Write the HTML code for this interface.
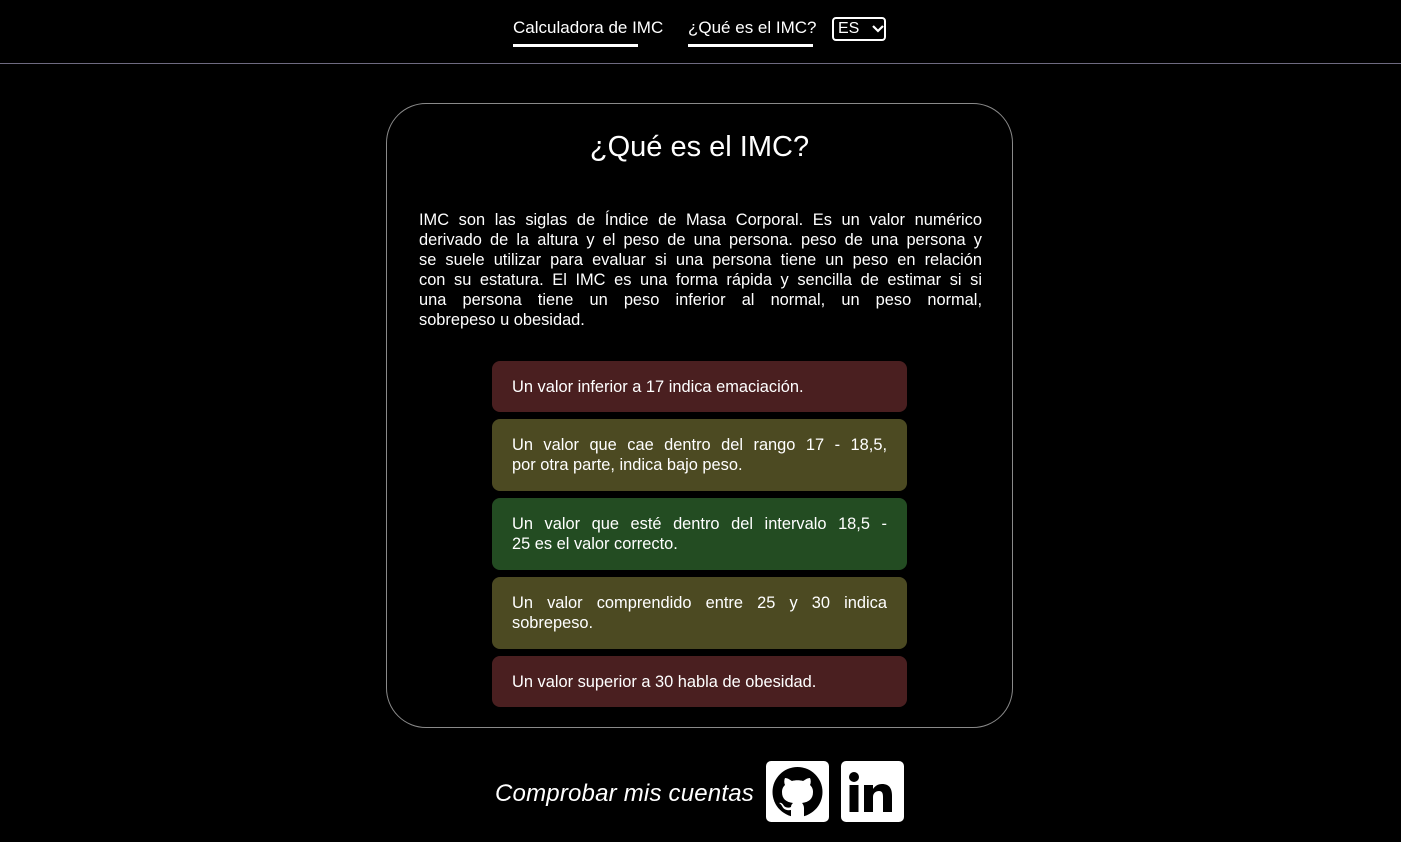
<!DOCTYPE html>
<html><head><meta charset="utf-8"><style>
body{margin:0;background:#000;color:#fff;font-family:"Liberation Sans",sans-serif;width:1401px;height:842px;overflow:hidden;position:relative}
.hdr{position:absolute;left:0;top:0;width:1401px;height:63px;border-bottom:1px solid #6e6a80}
.nav{position:absolute;top:18px;font-size:17px;white-space:nowrap}
.nav span{display:block;height:3px;background:#fff;margin-top:6px}
.sel{position:absolute;left:832px;top:17px;width:54px;height:24px;border:2px solid #fff;border-radius:4px;box-sizing:border-box;background:#000;font-size:16px;line-height:20px;padding-left:4px}
.card{position:absolute;left:386px;top:103px;width:625px;height:623px;border:1px solid #8a8a8a;border-radius:40px}
h1{position:absolute;left:0;width:100%;top:27px;margin:0;text-align:center;font-weight:normal;font-size:29px}
.p{position:absolute;left:32px;top:106px;width:563px;font-size:16.4px;line-height:20px}
.j{text-align:justify;text-align-last:justify;white-space:nowrap}
.b{position:absolute;left:105px;width:375px;padding:0 20px;border-radius:8px;font-size:16.4px;line-height:20px;display:flex;flex-direction:column;justify-content:center}
.r{background:#4a1f20}.y{background:#4c4a22}.g{background:#234c22}
.ft{position:absolute;top:780px;left:495px;font-style:italic;font-size:24px;letter-spacing:0.2px}
.ic{position:absolute;top:761px;width:63px;height:61px;background:#fff;border-radius:5px}
</style></head><body>
<div class="hdr"></div>
<div class="nav" style="left:513px">Calculadora de IMC<span style="width:125px"></span></div>
<div class="nav" style="left:688px">¿Qué es el IMC?<span style="width:125px"></span></div>
<div class="sel">ES <svg width="12" height="8" viewBox="0 0 12 8" style="margin-left:8px"><path d="M1 1l5 5 5-5" stroke="#fff" stroke-width="2.2" fill="none"/></svg></div>
<div class="card">
<h1>¿Qué es el IMC?</h1>
<div class="p">
<div class="j">IMC son las siglas de Índice de Masa Corporal. Es un valor numérico</div>
<div class="j">derivado de la altura y el peso de una persona. peso de una persona y</div>
<div class="j">se suele utilizar para evaluar si una persona tiene un peso en relación</div>
<div class="j">con su estatura. El IMC es una forma rápida y sencilla de estimar si si</div>
<div class="j">una persona tiene un peso inferior al normal, un peso normal,</div>
<div>sobrepeso u obesidad.</div>
</div>
<div class="b r" style="top:257px;height:51px"><div>Un valor inferior a 17 indica emaciación.</div></div>
<div class="b y" style="top:315px;height:72px"><div class="j">Un valor que cae dentro del rango 17 - 18,5,</div><div>por otra parte, indica bajo peso.</div></div>
<div class="b g" style="top:394px;height:72px"><div class="j">Un valor que esté dentro del intervalo 18,5 -</div><div>25 es el valor correcto.</div></div>
<div class="b y" style="top:473px;height:72px"><div class="j">Un valor comprendido entre 25 y 30 indica</div><div>sobrepeso.</div></div>
<div class="b r" style="top:552px;height:51px"><div>Un valor superior a 30 habla de obesidad.</div></div>
</div>
<div class="ft">Comprobar mis cuentas</div>
<div class="ic" style="left:766px"><svg width="63" height="61" viewBox="0 0 63 61"><circle cx="31.5" cy="31" r="25" fill="#000"/><path d="M25 56 v-7 c-6 1-8-2-9-4 c-1-2-3-3-3-3 c2-1 4 1 5 3 c2 2 5 2 7 1 c0-2 1-3 2-4 c-7-1-11-4-11-11 c0-3 1-5 3-7 c-1-2-1-5 0-7 c3 0 5 2 7 3 c3-1 8-1 11 0 c2-1 4-3 7-3 c1 2 1 5 0 7 c2 2 3 4 3 7 c0 7-4 10-11 11 c1 1 2 3 2 5 v9 c-4 1-9 1-13 0z" fill="#fff"/></svg></div>
<div class="ic" style="left:841px"><svg width="63" height="61" viewBox="0 0 63 61"><circle cx="13" cy="16" r="5" fill="#000"/><rect x="8.5" y="24" width="9" height="27" fill="#000"/><path d="M23 24h9v4c2-3 5-5 9-5c7 0 10 4 10 12v16h-9v-15c0-4-1-6-4-6s-6 2-6 6v15h-9z" fill="#000"/></svg></div>
</body></html>
